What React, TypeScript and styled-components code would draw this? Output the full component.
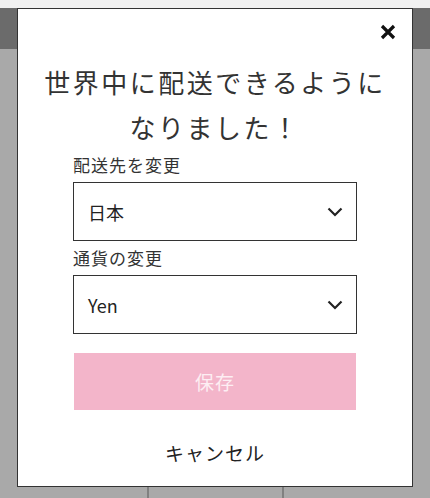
import * as React from 'react';
import styled, { createGlobalStyle } from 'styled-components';

const GlobalStyle = createGlobalStyle`
  html, body {
    margin: 0;
    padding: 0;
  }
  body {
    font-family: 'Noto Sans CJK JP', 'Noto Sans', sans-serif;
    color: #222;
  }
`;

const Page = styled.div`
  position: relative;
  width: 430px;
  height: 498px;
  overflow: hidden;
  display: flex;
  flex-direction: column;
  background: #a9a9a9;
`;

const TopStrip = styled.div`
  height: 8px;
  background: #f1f1f1;
`;

const HeaderBand = styled.div`
  height: 41px;
  background: #6b6b6b;
`;

const Body = styled.div`
  flex: 1;
  display: flex;
  flex-direction: column;
  justify-content: flex-end;
`;

const FooterRow = styled.div`
  height: 40px;
  display: grid;
  grid-template-columns: 147px 135px 1fr;
`;

const FooterCell = styled.div<{ $divider?: boolean }>`
  border-left: ${p => (p.$divider ? '2px solid #808080' : 'none')};
`;

const Modal = styled.div`
  position: absolute;
  left: 17px;
  top: 8px;
  width: 396px;
  height: 479px;
  box-sizing: border-box;
  background: #fff;
  border: 1px solid #333;
  display: flex;
  flex-direction: column;
  align-items: center;
`;

const CloseRow = styled.div`
  align-self: stretch;
  display: flex;
  justify-content: flex-end;
  padding: 13px 14px 0 0;
`;

const CloseButton = styled.button`
  width: 20px;
  height: 20px;
  padding: 0;
  border: none;
  background: none;
  display: flex;
  align-items: center;
  justify-content: center;
  cursor: pointer;
`;

const Title = styled.h2`
  margin: 17px 0 0;
  font-size: 26px;
  font-weight: 400;
  line-height: 45px;
  letter-spacing: 2.5px;
  text-align: center;
  color: #333;
`;

const Form = styled.div`
  width: 284px;
  display: flex;
  flex-direction: column;
`;

const Label = styled.div<{ $top: number }>`
  margin-top: ${p => p.$top}px;
  font-size: 17px;
  line-height: 24px;
  letter-spacing: 1px;
  color: #333;
`;

const Select = styled.div`
  margin-top: 5px;
  height: 59px;
  box-sizing: border-box;
  border: 1.5px solid #333;
  display: flex;
  align-items: center;
  justify-content: space-between;
  padding: 0 13px 0 14px;
  font-size: 18px;
  color: #222;
`;

const SaveButton = styled.button`
  margin: 19px 1px 0;
  height: 57px;
  border: none;
  background: #f3b5ca;
  color: #fdeef3;
  font-family: 'Noto Sans CJK JP', sans-serif;
  font-size: 19px;
  letter-spacing: 1px;
`;

const CancelLink = styled.div`
  margin-top: 30px;
  font-size: 19px;
  line-height: 26px;
  letter-spacing: 1px;
  color: #222;
`;

const Chevron = () => (
  <svg width="16" height="10" viewBox="0 0 16 10">
    <polyline points="1.5,1.5 8,8 14.5,1.5" fill="none" stroke="#222" strokeWidth="2.2" />
  </svg>
);

const CloseIcon = () => (
  <svg width="16" height="16" viewBox="0 0 16 16">
    <path d="M2 2 L14 14 M14 2 L2 14" stroke="#111" strokeWidth="3.2" />
  </svg>
);

export default function App() {
  return (
    <>
      <GlobalStyle />
      <Page>
        <TopStrip />
        <HeaderBand />
        <Body>
          <FooterRow>
            <FooterCell />
            <FooterCell $divider />
            <FooterCell $divider />
          </FooterRow>
        </Body>
        <Modal>
          <CloseRow>
            <CloseButton aria-label="閉じる">
              <CloseIcon />
            </CloseButton>
          </CloseRow>
          <Title>
            世界中に配送できるように
            <br />
            なりました！
          </Title>
          <Form>
            <Label $top={4}>配送先を変更</Label>
            <Select>
              <span>日本</span>
              <Chevron />
            </Select>
            <Label $top={5}>通貨の変更</Label>
            <Select>
              <span>Yen</span>
              <Chevron />
            </Select>
            <SaveButton>保存</SaveButton>
          </Form>
          <CancelLink>キャンセル</CancelLink>
        </Modal>
      </Page>
    </>
  );
}
